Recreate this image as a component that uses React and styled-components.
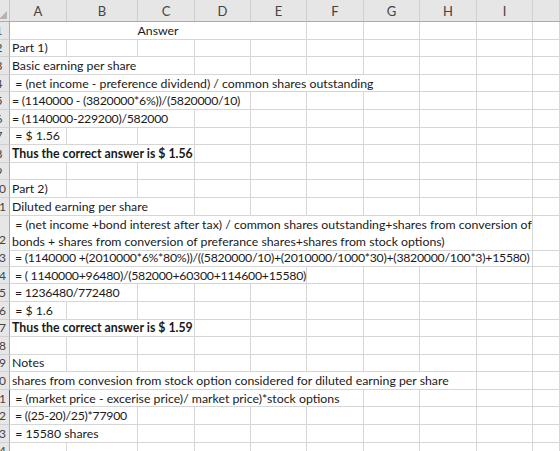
import React from 'react'
import styled, { createGlobalStyle } from 'styled-components'

const GlobalStyle = createGlobalStyle`
  html, body {
    margin: 0;
    padding: 0;
    background: #ffffff;
  }
  body {
    font-family: Lato, "Liberation Sans", sans-serif;
    overflow: hidden;
  }
`

const COLUMNS = '10px 57px 71px 57px 56px 56px 57px 56px 57px 56px 1fr'
const LETTERS = ['A', 'B', 'C', 'D', 'E', 'F', 'G', 'H', 'I', '']
const ROW_H = 17.6

const Sheet = styled.div`
  width: 560px;
  height: 451px;
  overflow: hidden;
  background: #fff;
`

const HeaderRow = styled.div`
  display: grid;
  grid-template-columns: ${COLUMNS};
  height: 22px;
  background: #e6e6e6;
  border-bottom: 1px solid #ababab;
  box-sizing: border-box;
`

const Corner = styled.div`
  position: relative;
  border-right: 1px solid #c6c6c6;
  overflow: hidden;

  > svg {
    position: absolute;
    right: 2px;
    bottom: 2px;
  }
`

const ColHead = styled.div`
  display: flex;
  align-items: center;
  justify-content: center;
  border-right: 1px solid #cfcfcf;
  color: #444;
  font-size: 13px;
  padding-top: 1px;
`

const Row = styled.div`
  display: grid;
  grid-template-columns: ${COLUMNS};
  height: ${props => props.h}px;
`

const RowHead = styled.div`
  display: flex;
  justify-content: flex-end;
  align-items: ${props => props.tall ? 'flex-end' : 'center'};
  overflow: hidden;
  background: #e6e6e6;
  border-right: 1px solid ${props => props.active ? '#217346' : '#ababab'};
  border-bottom: 1px solid #d0d0d0;
  box-sizing: border-box;

  > span {
    flex: 0 0 20px;
    text-align: center;
    color: #444;
    font-size: 12px;
    padding-bottom: ${props => props.tall ? '3px' : '0'};
  }
`

const Cell = styled.div`
  grid-column: span ${props => props.span || 1};
  display: flex;
  align-items: center;
  justify-content: ${props => props.center ? 'center' : 'flex-start'};
  border-right: 1px solid #d6d6d6;
  border-bottom: 1px solid #d6d6d6;
  box-sizing: border-box;
  padding: 0 2px;
  white-space: pre;
  font-size: 12.3px;
  letter-spacing: ${props => props.tight ? '-0.26px' : '0'};
  font-weight: ${props => props.bold ? 700 : 400};
  color: #1a1a1a;
  min-width: 0;
`

const WrapCell = styled(Cell)`
  flex-direction: column;
  align-items: flex-start;
  justify-content: center;
  line-height: 17px;
`

// formula rows full of digits are set a little tighter, as Calibri's figures are narrow
const rows = [
  { text: 'Answer', span: 5, center: true },
  { text: 'Part 1)', span: 1 },
  { text: 'Basic earning per share', span: 3 },
  { text: ' = (net income - preference dividend) / common shares outstanding', span: 7 },
  { text: '= (1140000 - (3820000*6%))/(5820000/10)', span: 4, tight: true },
  { text: '= (1140000-229200)/582000', span: 3, tight: true },
  { text: ' = $ 1.56', span: 1 },
  { text: 'Thus the correct answer is $ 1.56', span: 3, bold: true },
  { text: '', span: 1 },
  { text: 'Part 2)', span: 1 },
  { text: 'Diluted earning per share', span: 3 },
  {
    lines: [
      ' = (net income +bond interest after tax) / common shares outstanding+shares from conversion of',
      'bonds + shares from conversion of preferance shares+shares from stock options)',
    ],
    span: 9,
  },
  { text: ' = (1140000 +(2010000*6%*80%))/((5820000/10)+(2010000/1000*30)+(3820000/100*3)+15580)', span: 9, tight: true },
  { text: ' = ( 1140000+96480)/(582000+60300+114600+15580)', span: 5, tight: true },
  { text: ' = 1236480/772480', span: 2, tight: true },
  { text: ' = $ 1.6', span: 1 },
  { text: 'Thus the correct answer is $ 1.59', span: 3, bold: true },
  { text: '', span: 1 },
  { text: 'Notes', span: 1 },
  { text: 'shares from convesion from stock option considered for diluted earning per share', span: 8 },
  { text: ' = (market price - excerise price)/ market price)*stock options', span: 6, active: true },
  { text: ' = ((25-20)/25)*77900', span: 2, tight: true },
  { text: ' = 15580 shares', span: 2 },
  { text: '', span: 1 },
]

function SheetRow({ n, row }) {
  const tall = !!row.lines
  const filler = []
  for (let i = row.span; i < 10; i++) filler.push(<Cell key={i} />)

  return (
    <Row h={tall ? 33.6 : ROW_H}>
      <RowHead tall={tall} active={row.active}>
        <span>{n}</span>
      </RowHead>
      {tall ? (
        <WrapCell span={row.span}>
          {row.lines.map(l => <span key={l}>{l}</span>)}
        </WrapCell>
      ) : (
        <Cell span={row.span} bold={row.bold} center={row.center} tight={row.tight}>
          {row.text}
        </Cell>
      )}
      {filler}
    </Row>
  )
}

export default function App() {
  return (
    <Sheet>
      <GlobalStyle />
      <HeaderRow>
        <Corner>
          <svg width="8" height="8" viewBox="0 0 8 8">
            <polygon points="8,0 8,8 0,8" fill="#b4b4b4" />
          </svg>
        </Corner>
        {LETTERS.map((l, i) => <ColHead key={i}>{l}</ColHead>)}
      </HeaderRow>
      {rows.map((row, i) => <SheetRow key={i} n={i + 1} row={row} />)}
    </Sheet>
  )
}
